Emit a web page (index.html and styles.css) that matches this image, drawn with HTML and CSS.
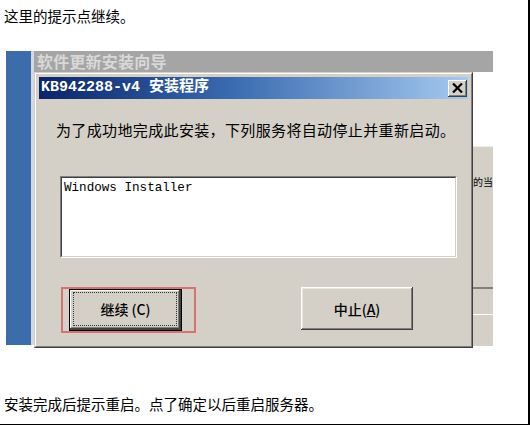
FILE: index.html
```html
<!DOCTYPE html>
<html lang="zh-CN">
<head>
<meta charset="utf-8">
<title>安装提示</title>
<link rel="stylesheet" href="styles.css">
</head>
<body>
<div class="page">
  <p class="para para-top">这里的提示点继续。</p>
  <div class="shot">
    <div class="desk"></div>
    <div class="gapstrip"></div>
    <div class="main">
      <div class="wiz-title">软件更新安装向导</div>
      <div class="row">
        <div class="dialog">
          <div class="dialog-inner">
            <div class="titlebar">
              <span class="title-text">KB942288-v4 安装程序</span>
              <span class="close">
                <svg width="11" height="10" viewBox="0 0 11 10"><path d="M1 0.5 L10 9.5 M10 0.5 L1 9.5" stroke="#000" stroke-width="2.2" fill="none"/></svg>
              </span>
            </div>
            <div class="body">
              <div class="msg">为了成功地完成此安装，下列服务将自动停止并重新启动。</div>
              <div class="listbox"><div class="listbox-in">Windows Installer</div></div>
              <div class="buttons">
                <div class="mark">
                  <div class="btn btn-default"><div class="focus">继续 (C)</div></div>
                </div>
                <div class="btn btn-plain">中止(<u>A</u>)</div>
              </div>
            </div>
          </div>
        </div>
        <div class="rstrip">
          <div class="rs-white"></div>
          <div class="rs-panel">
            <div class="rs-text">的当</div>
            <div class="rs-line1"></div>
            <div class="rs-line2"></div>
          </div>
        </div>
      </div>
    </div>
  </div>
  <p class="para para-bottom">安装完成后提示重启。点了确定以后重启服务器。</p>
</div>
</body>
</html>
```
FILE: styles.css
```css
html, body {
  margin: 0;
  padding: 0;
  background: #fff;
}
.page {
  width: 528px;
  height: 418px;
  padding-top: 6px;
  border-right: 2px solid #000;
  border-bottom: 2px solid #000;
  overflow: hidden;
  font-family: "Noto Sans CJK SC", "Noto Sans", sans-serif;
  color: #000;
}
.para {
  margin: 0;
  padding-left: 4px;
  font-size: 14.5px;
  line-height: 20px;
  height: 20px;
}
.para-bottom {
  margin-top: 46px;
}
.shot {
  display: flex;
  margin-top: 25px;
  margin-left: 6px;
  width: 487px;
  height: 297px;
}
.desk {
  width: 25px;
  height: 294px;
  background: #3b6daa;
}
.gapstrip {
  width: 3px;
  height: 294px;
  background: #d9d8d4;
}
.main {
  width: 459px;
  display: flex;
  flex-direction: column;
}
.wiz-title {
  height: 21px;
  background: #a5a5a5;
  color: #d8d8d8;
  font-weight: bold;
  font-size: 16px;
  line-height: 21px;
  padding-left: 3px;
  letter-spacing: 0.2px;
}
.row {
  display: flex;
  flex: 1;
}
.dialog {
  width: 437px;
  height: 274px;
  border: 1px solid;
  border-color: #d4d0c8 #404040 #404040 #d4d0c8;
  background: #d4d0c8;
}
.dialog-inner {
  height: 266px;
  border: 1px solid;
  border-color: #fff #808080 #808080 #fff;
  padding: 3px;
}
.titlebar {
  height: 22px;
  display: flex;
  align-items: center;
  justify-content: space-between;
  background: linear-gradient(to right, #0a246a 0%, #3a6bb0 45%, #a6caf0 100%);
}
.title-text {
  color: #fff;
  font-weight: bold;
  font-size: 15px;
  font-family: "Liberation Mono", "Noto Sans CJK SC", monospace;
  padding-left: 2px;
  line-height: 22px;
}
.close {
  width: 19px;
  height: 17px;
  margin-right: 1px;
  box-sizing: border-box;
  background: #d4d0c8;
  box-shadow: inset -1px -1px #404040, inset 1px 1px #fff, inset -2px -2px #808080;
  display: flex;
  align-items: center;
  justify-content: center;
}
.body {
  padding-left: 17px;
}
.msg {
  margin-top: 21px;
  font-size: 15px;
  line-height: 20px;
  letter-spacing: 0.36px;
  white-space: nowrap;
}
.listbox {
  margin-top: 36px;
  margin-left: 4px;
  width: 397px;
  height: 82px;
  box-sizing: border-box;
  border: 1px solid;
  border-color: #808080 #fff #fff #808080;
  background: #fff;
}
.listbox-in {
  height: 80px;
  box-sizing: border-box;
  border: 1px solid;
  border-color: #404040 #d4d0c8 #d4d0c8 #404040;
  font-family: "Liberation Mono", monospace;
  font-size: 12.6px;
  line-height: 16px;
  padding: 2px 0 0 2px;
}
.buttons {
  display: flex;
  margin-top: 29px;
  margin-left: 5px;
  align-items: flex-start;
}
.mark {
  border: 2px solid #d7736f;
  padding: 0 12px 0 6px;
  width: 113px;
}
.btn {
  box-sizing: border-box;
  background: #d4d0c8;
  display: flex;
  align-items: center;
  justify-content: center;
  font-size: 14px;
}
.btn-default {
  width: 113px;
  height: 42px;
  border: 1px solid #000;
  box-shadow: inset -2px -2px #404040, inset 1px 1px #fff, inset -3px -3px #808080;
  align-items: stretch;
  justify-content: stretch;
}
.focus {
  flex: 1;
  margin: 2px 4px 4px 3px;
  border: 1px dotted #333;
  display: flex;
  align-items: center;
  justify-content: center;
  font-weight: 500;
  padding-left: 1px;
}
.btn-plain {
  margin-left: 105px;
  width: 112px;
  height: 43px;
  box-shadow: inset -1px -1px #404040, inset 1px 1px #fff, inset -2px -2px #808080, inset 2px 2px #e8e6e0;
  font-weight: 500;
}
.rstrip {
  width: 20px;
  display: flex;
  flex-direction: column;
}
.rs-white {
  height: 74px;
  background: #fff;
}
.rs-panel {
  flex: 1;
  background: #d4d0c8;
  border-top: 1px solid #efeeea;
  overflow: hidden;
  margin-bottom: 2px;
}
.rs-text {
  margin-top: 28px;
  margin-left: 0;
  font-size: 10px;
  line-height: 14px;
  white-space: nowrap;
}
.rs-line1 {
  margin-top: 98px;
  height: 2px;
  background: #808080;
}
.rs-line2 {
  margin-top: 25px;
  height: 1px;
  background: #fff;
}
```
